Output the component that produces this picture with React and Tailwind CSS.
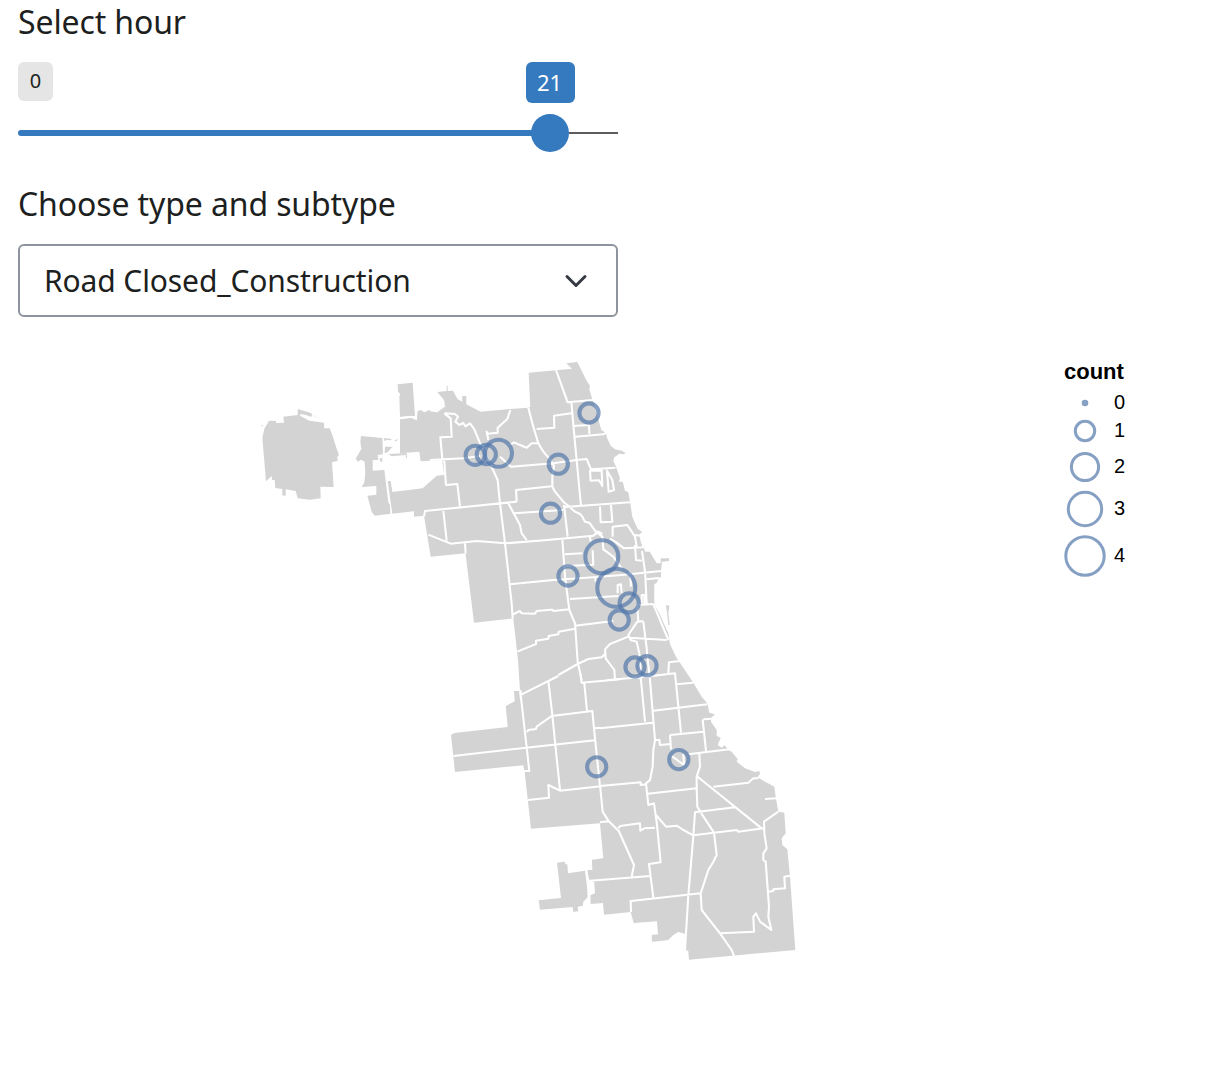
import React from "react";

const MAINLAND =
  "M400,419.3 411.3,417.7 416.7,420 417.7,411 420.7,410 424.3,412.3 429.3,410 435,411.3 441.7,406.7 444.7,404 444,400 437.3,392 446.7,391 446.7,385.7 447.7,385.7 447.7,391 453,390.7 457.7,399.3 462.3,401.7 462.3,396 466.3,396 466.3,404.3 480.7,411.7 510.3,409 528.3,407.7 530.3,406.7 528.7,372.7 572,368.7 566.3,363.3 577.3,362 586.7,381 590,385.7 589.3,389.3 593.3,402.7 596.7,413.3 601.3,430 606,432.7 606.7,437.3 610.7,445.7 615,449.3 621.7,450.7 625.3,452.7 624.3,454.3 619.3,453.7 614.3,457.3 613.3,460.7 616,466.7 620,478.3 618.7,481.7 622.7,481.7 625,490.7 628.3,492.3 630,501.7 632.3,516.7 637.3,528.3 642.3,532.3 639.3,534.3 640.7,541.7 645.3,551.7 649.7,551.7 656.7,563.3 660.7,563.3 660.7,558.3 669,558.3 669,561 662,561.7 661,570 661,577.3 658.7,578 656.7,582.7 654.3,584.3 654.3,604 659.3,613.3 668.3,633.3 670,644 676,657 679.3,661.7 693.3,682.7 701.7,696.7 707.3,703.3 709.3,712.7 715,714.3 710.7,718.3 711,721.7 716.7,730 716.7,736 720.7,737.7 717.7,745 721.7,747.7 724.7,745.3 728.3,750 731.7,751.7 737.7,759 736.7,761.7 745,768.3 755,772 759.3,771 760,774 757.3,777.3 774.3,786.7 775.7,796.7 778.3,811.7 784.3,812.7 785.7,833.3 781.7,838.3 782.3,845 787.3,849.3 790,876.7 795.3,950 689,959.7 688.3,951 685.3,950 685.7,934 678.3,932 673.3,935 668.3,940 658.3,941.3 652,941.7 651.7,935 658,934.3 657,921.3 633.7,923 630.7,912 604,914.7 603,903 590.7,904 590.3,895.3 595,893.3 594.3,882.3 588.3,879.3 587.3,870 592.3,870 592,859.7 603.3,858.3 600,823.3 531,828.7 524.7,772.3 523.3,765.3 455,772 451,735 454.3,733 507.7,727 505.7,706 514.7,701.3 514,691 520,691 518,660 513.3,618.3 474,622.7 465.5,553.3 430.7,556.7 424,515.7 414,516.7 414,511.3 392.3,513.7 387.7,481 390.7,481 392.3,492 422.7,488.3 436.7,475.7 444.3,474.7 442,460 420.7,461.3 419.3,451.7 400,453.3Z";

const OUTLYING = [
  {
    at: "translate(250 350) scale(.33333)",
    d: "M57,212 78,213 78,219 102,218 100,200 143,195 143,177 183,189 187,196 183,200 168,195 152,192 150,197 178,212 222,218 223,235 239,235 248,258 258,290 267,315 262,320 263,333 246,337 251,411 211,410 212,445 180,449 143,445 137,423 107,418 107,438 97,436 97,417 76,414 74,390 66,390 65,378 48,394 37,264 43,236Z M32,226 38,225 38,230Z M193,196 198,198 197,201Z M333,258 397,264 399,313 383,315 385,330 368,330 368,362 403,360 415,458 420,464 421,491 374,497 365,485 352,437 379,434 379,408 335,411 343,397 346,370 344,335 333,329 324,335 317,326 334,297 331,275Z M402,264 424,267 424,271 411,270 403,273Z M434,270 444,268 437,275Z M405,290 428,290 412,307 404,310Z M389,325 397,324 397,336 390,334Z M416,312 470,309 471,325 468,325 467,315 425,319Z M443,103 488,98 495,198 450,201 448,140 451,132 444,125Z",
  },
  {
    at: "translate(530 810) scale(.33333)",
    d: "M81,158 104,155 106,163 112,163 114,190 165,182 171,230 173,262 160,275 158,287 143,290 145,304 130,306 128,291 30,299 26,271 93,264Z",
  },
  {
    at: "translate(550 490) scale(.33333)",
    d: "M348,345 358,347 355,370 359,405 355,405 352,375Z",
  },
];

const BORDERS = [
  {
    at: "translate(430 350) scale(.33333)",
    d: "M-90,204 -56,200 -39,208 M0,181 20,184 45,166 M22,175 42,160 M43,190 62,205 65,260 31,262 37,328 M0,330 100,325 151,318 M43,190 75,192 84,200 76,215 88,225 100,219 106,229 120,220 133,238 148,275 180,340 203,390 210,462 M241,180 232,207 203,233 203,248 173,251 170,245 175,270 M295,173 307,220 325,280 340,305 360,328 372,348 367,380 367,410 M240,285 252,277 265,283 290,293 305,280 325,280 M210,320 243,350 370,340 440,330 470,327 483,358 556,353 M378,60 413,157 488,150 M320,237 373,233 372,197 424,190 M424,155 430,225 453,468 M430,228 477,225 478,252 M436,260 520,253 530,247 M37,330 43,335 48,405 82,402 90,470 M260,455 258,420 365,409 M252,490 400,480 M480,362 482,392 507,391 517,408 515,362Z M531,362 536,425 552,420 547,390Z",
  },
  {
    at: "translate(420 500) scale(.33333)",
    d: "M12,50 15,33 290,5 M70,33 80,122 M25,104 92,131 170,123 255,130 392,119 M135,130 137,160 M240,10 255,130 275,310 278,355 M265,10 300,75 305,100 320,120 M270,253 392,241 M275,345 300,333 305,340 345,341 350,333 392,329 M292,455 348,432 348,422 385,416 386,408 392,407 M301,570 303,600",
  },
  {
    at: "translate(550 490) scale(.33333)",
    d: "M7,-10 15,5 40,35 60,52 75,65 90,72 97,80 105,95 118,98 135,122 157,140 160,178 190,200 215,235 M45,51 240,37 M42,45 53,140 M0,149 130,137 145,125 157,132 M37,147 45,260 58,360 75,400 83,515 95,570 M45,193 97,190 M48,228 130,224 128,180 M120,140 122,155 M0,271 130,262 215,255 333,243 M150,50 152,97 187,95 183,45 M188,140 188,110 232,105 255,140 260,170 M180,146 200,158 222,175 280,172 M255,165 258,210 275,212 M255,135 276,138 279,170 M276,183 285,245 M135,260 137,275 M60,327 205,318 M203,310 203,285 213,283 215,310 M240,245 243,290 M285,240 290,340 M290,268 328,264 M310,342 355,450 M275,340 275,315 283,315 283,345 M260,345 310,342 M75,407 190,393 M0,359 8,359 10,363 58,358 M0,437 25,433 26,425 75,416 M25,555 83,522 115,507 155,502 165,492 M195,570 193,540 167,505 165,478 180,462 235,440 M262,395 235,435 242,450 260,455 268,490 M280,395 286,443 291,482 M240,443 350,450 M262,350 265,395 280,393",
  },
  {
    at: "translate(440 660) scale(.33333)",
    d: "M245,103 355,48 M421,40 425,68 433,70 441,153 M425,68 540,58 M325,62 337,165 346,255 360,390 M261,217 265,210 288,207 290,200 335,168 457,153 462,205 480,380 M462,205 482,203 M40,288 258,263 465,241 M241,95 268,333 252,333 M264,420 327,413 325,375 360,392 482,379",
  },
  {
    at: "translate(600 650) scale(.33333)",
    d: "M20,91 155,78 225,70 243,248 M118,10 122,80 135,215 M140,0 150,90 165,270 160,300 158,350 150,390 138,400 145,465 162,460 170,517 M0,235 158,218 M160,182 322,163 M230,103 280,98 M205,70 207,37 240,33 M310,208 335,206 M308,208 318,303 M210,255 310,245 M210,255 213,298 M165,270 178,270 180,285 212,282 M265,313 388,298 M215,318 252,345 250,312 M298,312 300,350 290,380 290,415 292,470 304,490 M0,408 122,397 122,405 138,403 M143,431 290,415 M290,378 485,535 M340,410 445,398 460,385 475,385 M283,487 405,472 M495,447 530,445 M0,405 8,485 25,512 55,542 M0,517 25,514",
  },
  {
    at: "translate(530 810) scale(.33333)",
    d: "M265,60 312,165 305,200 M265,55 270,48 330,40 331,62 343,55 375,53 M380,35 392,157 357,162 370,263 M378,15 408,50 440,47 460,60 490,76 M495,7 490,78 475,255 465,420 M514,10 552,68 560,135 550,155 535,180 512,250 515,300 570,370 605,420 612,438 M172,213 360,198 M303,273 512,250 M302,270 303,306 M570,370 672,365 670,320 678,310 690,335 724,360 715,320 717,290 707,155 700,150 700,130 710,115 703,70 702,35 745,5 M490,76 620,60 625,65 700,55 M715,245 730,243 730,238 765,235 763,200 780,197 M168,180 176,215",
  },
];

const EVENTS = [
  [475.2, 455.3, 1],
  [486.3, 454.5, 1],
  [498.5, 453.3, 2],
  [589, 413, 1],
  [558.3, 464.2, 1],
  [550.5, 513.2, 1],
  [568, 576, 1],
  [601.8, 556.8, 3],
  [616.3, 587.8, 4],
  [629.2, 602.8, 1],
  [619.2, 620, 1],
  [635, 667, 1],
  [647, 665.7, 1],
  [596.7, 766.8, 1],
  [678.8, 759.6, 1],
];
const RADII = [1.5, 9.6, 13.5, 16.5, 19];

function ChicagoMap() {
  return (
    <svg viewBox="250 350 560 620" className="ml-[250px] mt-[33px] h-[620px] w-[560px] shrink-0" aria-label="Chicago neighborhoods">
      <g fill="#d3d3d3">
        <path d={MAINLAND} />
        {OUTLYING.map((p) => (
          <path key={p.at} transform={p.at} d={p.d} />
        ))}
      </g>
      <g fill="none" stroke="#fff" strokeWidth="6.2" strokeLinejoin="round">
        {BORDERS.map((p) => (
          <path key={p.at} transform={p.at} d={p.d} />
        ))}
      </g>
      <g fill="none" stroke="#5378ab" strokeOpacity=".7" strokeWidth="4.1">
        {EVENTS.map(([x, y, n]) => (
          <circle key={`${x}-${y}`} cx={x} cy={y} r={RADII[n]} />
        ))}
      </g>
    </svg>
  );
}

const LEGEND = [
  { n: 0, h: "h-[22px]", r: 1.8 },
  { n: 1, h: "h-[34px]", r: 9.7 },
  { n: 2, h: "h-[38px]", r: 13.6 },
  { n: 3, h: "h-[46px]", r: 16.7 },
  { n: 4, h: "h-[48px]", r: 19.2 },
];

function Legend() {
  return (
    <div className="ml-[254px] mt-[41px] font-['Liberation_Sans',Arial,sans-serif] text-black">
      <div className="h-[34px] text-[22px] leading-7 font-bold">count</div>
      {LEGEND.map(({ n, h, r }) => (
        <div key={n} className={`flex items-center ${h}`}>
          <svg viewBox="-21 -21 42 42" className="h-[42px] w-[42px] shrink-0">
            <circle r={r} fill="none" stroke="#5378ab" strokeOpacity=".7" strokeWidth="3" />
          </svg>
          <span className="mb-0.5 ml-2 text-[20px] leading-5">{n}</span>
        </div>
      ))}
    </div>
  );
}

export default function App() {
  return (
    <main className="h-[1082px] w-[1210px] overflow-hidden bg-white font-['Noto_Sans',sans-serif] text-[#1d1f21]">
      <section className="ml-[18px] w-[600px]">
        <label className="block h-[62px] text-[32px] leading-[43px] tracking-[-0.12px]">Select hour</label>
        <div className="flex h-[41px] items-start justify-between">
          <span className="flex h-[39px] w-[35px] items-center justify-center rounded-md bg-[#e5e5e5] pb-0.5 text-[20px]">0</span>
          <span className="mr-[43px] flex h-[41px] w-[49px] items-center justify-center rounded-md bg-[#3579be] pr-0.5 text-[22px] text-white">21</span>
        </div>
        <div className="mt-[11px] flex h-[38px] items-center">
          <div className="h-1.5 w-[514px] rounded-l-sm bg-[#3579be]" />
          <div className="-ml-px h-[38px] w-[38px] rounded-full bg-[#3579be]" />
          <div className="h-0.5 flex-1 bg-[#5c5c5c]" />
        </div>
        <label className="mt-[30px] block h-[62px] text-[32px] leading-[43px] tracking-[-0.12px]">Choose type and subtype</label>
        <div className="flex h-[73px] items-center justify-between rounded-md border-2 border-[#8d949e] pl-6 pr-[27px] text-[30px] tracking-[-0.11px]">
          <span>Road Closed_Construction</span>
          <svg viewBox="0 0 26 18" className="h-[18px] w-[26px]" fill="none" stroke="#343a40" strokeWidth="3" strokeLinecap="round" strokeLinejoin="round">
            <path d="M4 4.5 13 13.5 22 4.5" />
          </svg>
        </div>
      </section>
      <section className="flex items-start">
        <ChicagoMap />
        <Legend />
      </section>
    </main>
  );
}
